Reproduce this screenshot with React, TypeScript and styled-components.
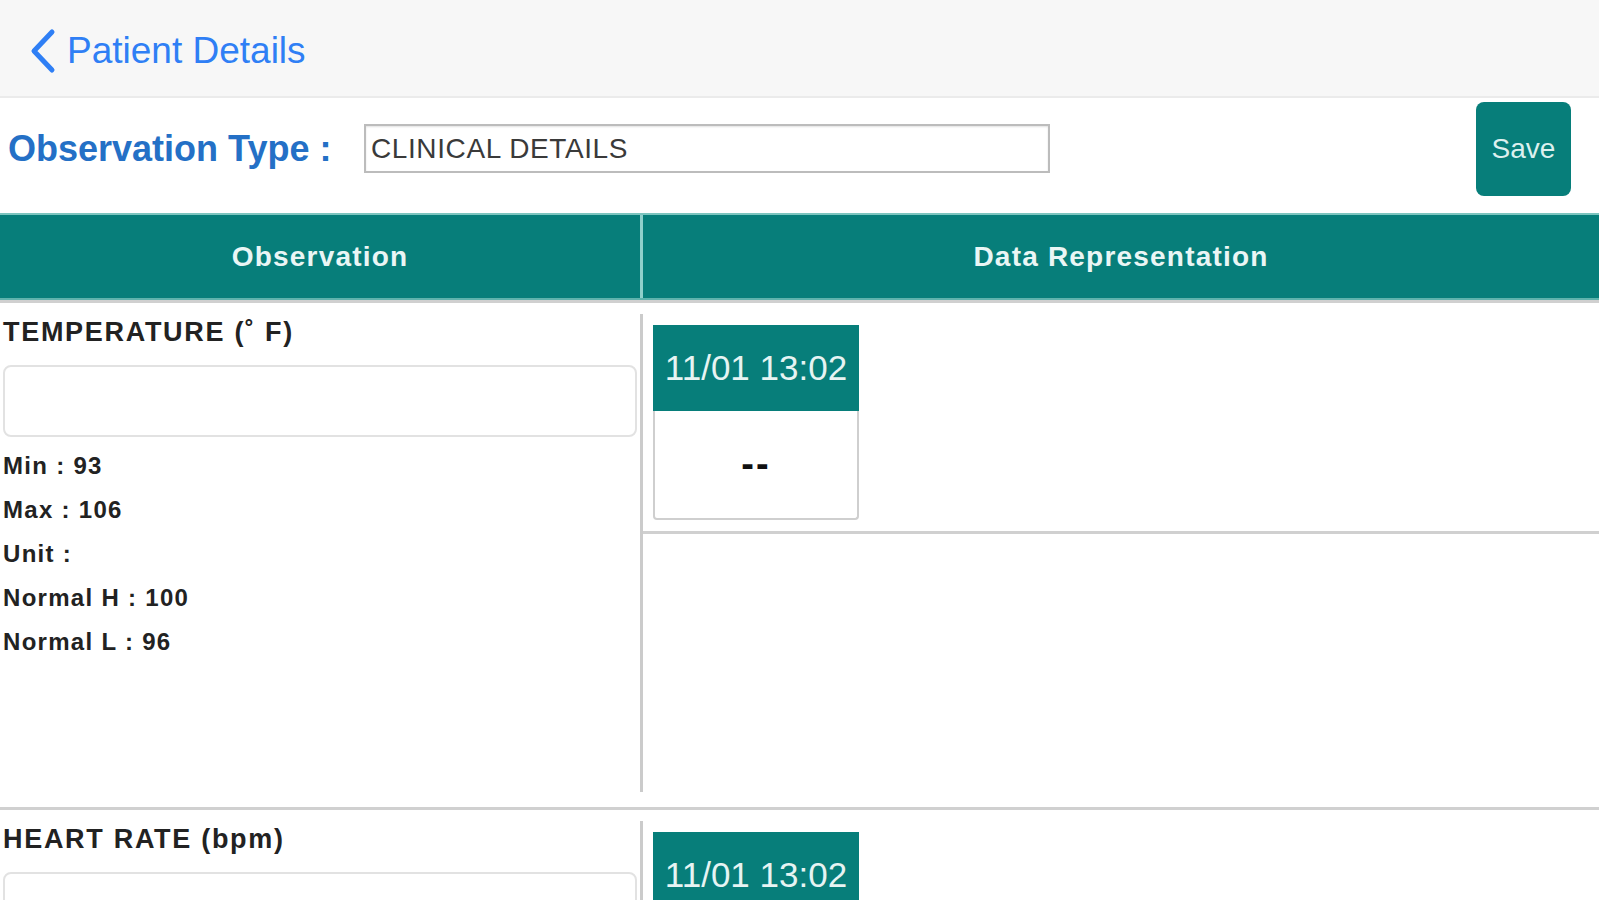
import styled, { createGlobalStyle } from 'styled-components';

type IObservation = {
  name: string;
  time: string;
  value: string;
  stats?: { label: string; value: string }[];
};

const observations: IObservation[] = [
  {
    name: 'TEMPERATURE (˚ F)',
    time: '11/01 13:02',
    value: '--',
    stats: [
      { label: 'Min', value: '93' },
      { label: 'Max', value: '106' },
      { label: 'Unit', value: '' },
      { label: 'Normal H', value: '100' },
      { label: 'Normal L', value: '96' },
    ],
  },
  { name: 'HEART RATE (bpm)', time: '11/01 13:02', value: '--' },
];

const App = () => {
  return (
    <>
      <GlobalStyle />
      <Page>
        <NavBar>
          <BackButton>
            <svg width="27" height="46" viewBox="0 0 27 46">
              <polyline
                points="23,4 5,23 23,42"
                fill="none"
                stroke="currentColor"
                strokeWidth="5"
                strokeLinecap="round"
                strokeLinejoin="round"
              />
            </svg>
            <span>Patient Details</span>
          </BackButton>
        </NavBar>

        <TypeRow>
          <TypeLabel>Observation Type :</TypeLabel>
          <TypeField>CLINICAL DETAILS</TypeField>
          <SaveButton>Save</SaveButton>
        </TypeRow>

        <TableHeader>
          <HeaderCell>Observation</HeaderCell>
          <HeaderDivider />
          <HeaderCell>Data Representation</HeaderCell>
        </TableHeader>

        {observations.map((obs) => (
          <ObservationRow key={obs.name} obs={obs} />
        ))}
      </Page>
    </>
  );
};

export default App;

const ObservationRow = ({ obs }: { obs: IObservation }) => (
  <Row>
    <LeftCell>
      <ObsTitle>{obs.name}</ObsTitle>
      <ValueInput />
      {obs.stats && (
        <Stats>
          {obs.stats.map((s) => (
            <StatLine key={s.label}>
              {s.label} : {s.value}
            </StatLine>
          ))}
        </Stats>
      )}
    </LeftCell>
    <VDivider />
    <RightCell>
      <Reading>
        <TimeChip>{obs.time}</TimeChip>
        <ValueBox>{obs.value}</ValueBox>
      </Reading>
      <RightLine />
    </RightCell>
  </Row>
);

/* Styles */

const teal = '#077e7a';

const GlobalStyle = createGlobalStyle`
  html, body {
    margin: 0;
    padding: 0;
    background: #fff;
  }
  body {
    font-family: 'Liberation Sans', Arial, sans-serif;
    overflow: hidden;
  }
  * {
    box-sizing: border-box;
  }
`;

const Page = styled.div`
  width: 1599px;
  height: 900px;
  overflow: hidden;
`;

const NavBar = styled.div`
  display: flex;
  align-items: center;
  height: 98px;
  padding: 5px 0 0 29px;
  background: #f7f7f7;
  border-bottom: 2px solid #ebebeb;
`;

const BackButton = styled.div`
  display: flex;
  align-items: center;
  gap: 11px;
  color: #2f7ff5;
  font-size: 37px;
  cursor: pointer;
`;

const TypeRow = styled.div`
  display: flex;
  align-items: center;
  height: 115px;
  padding: 0 28px 14px 8px;
`;

const TypeLabel = styled.div`
  flex: 0 0 356px;
  font-size: 36px;
  font-weight: bold;
  color: #2470c6;
`;

const TypeField = styled.div`
  display: flex;
  align-items: center;
  width: 686px;
  height: 49px;
  padding-left: 5px;
  border: 2px solid #bcbcbc;
  box-shadow: inset 0 1px 2px rgba(0, 0, 0, 0.12);
  font-size: 28px;
  letter-spacing: 0.6px;
  color: #3a3a3a;
`;

const SaveButton = styled.button`
  margin-left: auto;
  width: 95px;
  height: 94px;
  border: none;
  border-radius: 8px;
  background: ${teal};
  color: #dcf0ee;
  font-family: inherit;
  font-size: 28px;
  cursor: pointer;
`;

const TableHeader = styled.div`
  display: grid;
  grid-template-columns: 640px 3px 1fr;
  height: 87px;
  background: ${teal};
  border-top: 2px solid #7cc5bf;
  border-bottom: 2px solid #5fb3ad;
`;

const HeaderCell = styled.div`
  display: flex;
  align-items: center;
  justify-content: center;
  font-size: 28px;
  font-weight: bold;
  letter-spacing: 1.2px;
  color: #eaf6f5;
`;

const HeaderDivider = styled.div`
  background: #8fd0cb;
`;

const Row = styled.div`
  display: grid;
  grid-template-columns: 640px 3px 1fr;
  height: 507px;
  border-top: 3px solid #d0d0d0;

  &:first-of-type {
    border-top-color: #fff;
  }
`;

const LeftCell = styled.div`
  padding: 13px 3px 0;
`;

const ObsTitle = styled.div`
  font-size: 27px;
  line-height: 32px;
  font-weight: bold;
  letter-spacing: 1.7px;
  color: #222;
`;

const ValueInput = styled.div`
  margin-top: 17px;
  height: 72px;
  border: 2px solid #e2e2e2;
  border-radius: 8px;
`;

const Stats = styled.div`
  margin-top: 7px;
`;

const StatLine = styled.div`
  font-size: 24px;
  line-height: 44px;
  font-weight: bold;
  letter-spacing: 1.3px;
  color: #222;
`;

const VDivider = styled.div`
  margin: 11px 0 15px;
  background: #cbcbcb;
`;

const RightCell = styled.div`
  padding-top: 22px;
`;

const Reading = styled.div`
  width: 206px;
  margin-left: 10px;
`;

const TimeChip = styled.div`
  display: flex;
  align-items: center;
  justify-content: center;
  height: 86px;
  background: ${teal};
  color: #e6f4f3;
  font-size: 35px;
`;

const ValueBox = styled.div`
  display: flex;
  align-items: center;
  justify-content: center;
  height: 109px;
  border: 2px solid #cfcfcf;
  border-top: none;
  border-radius: 0 0 4px 4px;
  font-size: 38px;
  font-weight: bold;
  letter-spacing: 2px;
  color: #111;
`;

const RightLine = styled.div`
  margin-top: 11px;
  height: 3px;
  background: #d0d0d0;
`;
